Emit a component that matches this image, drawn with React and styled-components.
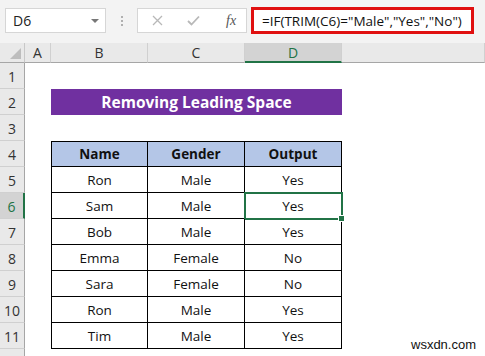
import React from "react";
import styled, { createGlobalStyle, css } from "styled-components";

const GREEN = "#217346";

const Global = createGlobalStyle`
  body {
    margin: 0;
    background: #fff;
    font-family: "Open Sans", "Noto Sans", sans-serif;
    overflow: hidden;
  }
`;

const Page = styled.div`
  width: 485px;
  height: 356px;
  position: relative;
  overflow: hidden;
`;

const TopBar = styled.div`
  height: 43px;
  background: #f3f3f3;
  display: flex;
  align-items: flex-start;
  padding: 8px 0 0 5px;
  box-sizing: border-box;
`;

const NameBox = styled.div`
  width: 101px;
  height: 25px;
  box-sizing: border-box;
  background: #fff;
  border: 1px solid #d6d6d6;
  display: flex;
  align-items: center;
  justify-content: space-between;
  padding: 0 6px 0 7px;
  font-size: 14px;
  color: #222;
`;

const Caret = styled.span`
  width: 0;
  height: 0;
  border-left: 4px solid transparent;
  border-right: 4px solid transparent;
  border-top: 4px solid #777;
`;

const Dots = styled.div`
  width: 31px;
  height: 25px;
  display: flex;
  flex-direction: column;
  align-items: center;
  justify-content: center;
  gap: 2px;
  & span {
    width: 2px;
    height: 2px;
    background: #b0b0b0;
  }
`;

const FxButtons = styled.div`
  width: 110px;
  height: 25px;
  box-sizing: border-box;
  background: #fff;
  border: 1px solid #d6d6d6;
  display: flex;
  align-items: center;
  padding-left: 14px;
  gap: 24px;
  color: #b4b4b4;
`;

const Fx = styled.span`
  font-family: "Liberation Serif", serif;
  font-style: italic;
  font-size: 14px;
  color: #555;
  margin-left: 2px;
`;

const FormulaBox = styled.div`
  margin-left: 4px;
  margin-top: -1px;
  width: 223px;
  height: 27px;
  box-sizing: border-box;
  background: #fff;
  border: 3px solid #e01010;
  display: flex;
  align-items: center;
  padding-left: 8px;
  font-size: 13.5px;
  color: #111;
  white-space: nowrap;
  overflow: hidden;
`;

const Sheet = styled.div`
  display: grid;
  grid-template-columns: 25px 26px 97px 97px 97px 1fr;
  grid-template-rows: 20px repeat(12, 26px);
`;

const Corner = styled.div`
  background: #e9e9e9;
  border-right: 1px solid #c8c8c8;
  border-bottom: 1px solid #a6a6a6;
  box-sizing: border-box;
  position: relative;
  &::after {
    content: "";
    position: absolute;
    right: 3px;
    bottom: 3px;
    border-left: 11px solid transparent;
    border-bottom: 11px solid #bdbdbd;
  }
`;

const ColHead = styled.div`
  background: ${(p) => (p.$active ? "#d3d3d3" : "#e9e9e9")};
  color: ${(p) => (p.$active ? GREEN : "#333")};
  border-right: 1px solid #d0d0d0;
  border-bottom: ${(p) => (p.$active ? `2px solid ${GREEN}` : "1px solid #a6a6a6")};
  box-sizing: border-box;
  display: flex;
  align-items: center;
  justify-content: center;
  font-size: 14px;
`;

const RowHead = styled.div`
  background: ${(p) => (p.$active ? "#d3d3d3" : "#e9e9e9")};
  color: ${(p) => (p.$active ? GREEN : "#333")};
  border-right: ${(p) => (p.$active ? `2px solid ${GREEN}` : "1px solid #a6a6a6")};
  border-bottom: 1px solid #d0d0d0;
  box-sizing: border-box;
  display: flex;
  align-items: center;
  justify-content: center;
  font-size: 14px;
  padding-top: 2px;
`;

const Empty = styled.div``;

const Title = styled.div`
  grid-column: span 3;
  background: #7030a0;
  color: #fff;
  font-weight: 700;
  font-size: 15.5px;
  display: flex;
  align-items: center;
  justify-content: center;
`;

const Cell = styled.div`
  box-sizing: border-box;
  border-right: 1px solid #000;
  border-bottom: 1px solid #000;
  display: flex;
  align-items: center;
  justify-content: center;
  font-size: 13.5px;
  color: #111;
  position: relative;
  ${(p) => p.$first && css`border-left: 1px solid #000;`}
  ${(p) =>
    p.$head &&
    css`
      border-top: 1px solid #000;
      background: #b4c6e7;
      font-weight: 700;
    `}
  ${(p) =>
    p.$selected &&
    css`
      &::after {
        content: "";
        position: absolute;
        left: -1px;
        top: -1px;
        right: -2px;
        bottom: -2px;
        border: 2px solid ${GREEN};
      }
      &::before {
        content: "";
        position: absolute;
        right: -4px;
        bottom: -4px;
        width: 5px;
        height: 5px;
        background: ${GREEN};
        border: 1px solid #fff;
        z-index: 2;
      }
    `}
`;

const Watermark = styled.div`
  position: absolute;
  left: 411px;
  top: 337px;
  font-family: "Liberation Sans", sans-serif;
  font-size: 13px;
  color: #111;
`;

const rows = [
  ["Ron", "Male", "Yes"],
  ["Sam", "Male", "Yes"],
  ["Bob", "Male", "Yes"],
  ["Emma", "Female", "No"],
  ["Sara", "Female", "No"],
  ["Ron", "Male", "Yes"],
  ["Tim", "Male", "Yes"],
];

export default function App() {
  return (
    <Page>
      <Global />
      <TopBar>
        <NameBox>
          D6
          <Caret />
        </NameBox>
        <Dots>
          <span />
          <span />
          <span />
        </Dots>
        <FxButtons>
          <svg width="11" height="11" viewBox="0 0 11 11">
            <path d="M1 1L10 10M10 1L1 10" stroke="#b8b8b8" strokeWidth="1.3" />
          </svg>
          <svg width="13" height="11" viewBox="0 0 13 11">
            <path d="M1 6L4.5 9.5L12 1.5" stroke="#b8b8b8" strokeWidth="1.8" fill="none" />
          </svg>
          <Fx>fx</Fx>
        </FxButtons>
        <FormulaBox>=IF(TRIM(C6)="Male","Yes","No")</FormulaBox>
      </TopBar>
      <Sheet>
        <Corner />
        <ColHead>A</ColHead>
        <ColHead>B</ColHead>
        <ColHead>C</ColHead>
        <ColHead $active>D</ColHead>
        <ColHead />

        <RowHead>1</RowHead>
        <Empty /><Empty /><Empty /><Empty /><Empty />

        <RowHead>2</RowHead>
        <Empty />
        <Title>Removing Leading Space</Title>
        <Empty />

        <RowHead>3</RowHead>
        <Empty /><Empty /><Empty /><Empty /><Empty />

        <RowHead>4</RowHead>
        <Empty />
        <Cell $head $first>Name</Cell>
        <Cell $head>Gender</Cell>
        <Cell $head>Output</Cell>
        <Empty />

        {rows.map((r, i) => (
          <React.Fragment key={i}>
            <RowHead $active={i === 1}>{i + 5}</RowHead>
            <Empty />
            <Cell $first>{r[0]}</Cell>
            <Cell>{r[1]}</Cell>
            <Cell $selected={i === 1}>{r[2]}</Cell>
            <Empty />
          </React.Fragment>
        ))}

        <RowHead />
      </Sheet>
      <Watermark>wsxdn.com</Watermark>
    </Page>
  );
}
